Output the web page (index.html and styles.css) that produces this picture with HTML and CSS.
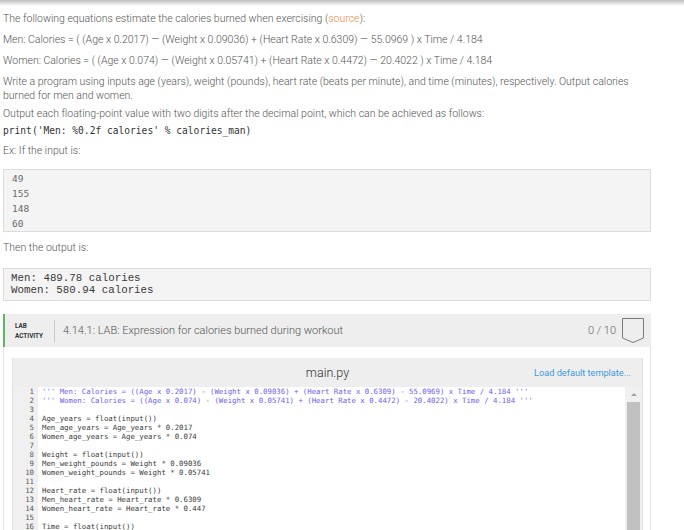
FILE: index.html
```html
<!DOCTYPE html>
<html lang="en">
<head>
<meta charset="utf-8">
<title>LAB: Expression for calories burned during workout</title>
<link rel="stylesheet" href="styles.css">
</head>
<body>
<div class="topbar"></div>
<main class="page">
  <p>The following equations estimate the calories burned when exercising (<a class="src">source</a>):</p>
  <p>Men: Calories = ( (Age x 0.2017) — (Weight x 0.09036) + (Heart Rate x 0.6309) — 55.0969 ) x Time / 4.184</p>
  <p>Women: Calories = ( (Age x 0.074) — (Weight x 0.05741) + (Heart Rate x 0.4472) — 20.4022 ) x Time / 4.184</p>
  <p class="p-write">Write a program using inputs age (years), weight (pounds), heart rate (beats per minute), and time (minutes), respectively. Output calories burned for men and women.</p>
  <p class="p-output">Output each floating-point value with two digits after the decimal point, which can be achieved as follows:<code class="inline-code">print('Men: %0.2f calories' % calories_man)</code></p>
  <p class="p-ex">Ex: If the input is:</p>
  <pre class="sample sample-in">49
155
148
60</pre>
  <p class="p-then">Then the output is:</p>
  <pre class="sample sample-out">Men: 489.78 calories
Women: 580.94 calories</pre>

  <section class="lab">
    <header class="lab-head">
      <div class="lab-tag">LAB<br>ACTIVITY</div>
      <div class="lab-divider"></div>
      <div class="lab-title">4.14.1: LAB: Expression for calories burned during workout</div>
      <div class="lab-score">0 / 10</div>
      <svg class="badge" width="24" height="27" viewBox="0 0 24 27"><path d="M1.5 1.5 H22.5 V21 L12 25.5 L1.5 21 Z" fill="none" stroke="#7a7a7a" stroke-width="1"/></svg>
    </header>
    <div class="lab-body">
      <div class="editor">
        <div class="editor-head">
          <span></span>
          <span class="filename">main.py</span>
          <a class="load">Load default template...</a>
        </div>
        <div class="editor-main">
          <pre class="gutter">1
2
3
4
5
6
7
8
9
10
11
12
13
14
15
16</pre>
          <pre class="code"><span class="cm">''' Men: Calories = ((Age x 0.2017) - (Weight x 0.09036) + (Heart Rate x 0.6309) - 55.0969) x Time / 4.184 '''</span>
<span class="cm">''' Women: Calories = ((Age x 0.074) - (Weight x 0.05741) + (Heart Rate x 0.4472) - 20.4022) x Time / 4.184 '''</span>

Age_years = float(input())
Men_age_years = Age_years * 0.2017
Women_age_years = Age_years * 0.074

Weight = float(input())
Men_weight_pounds = Weight * 0.09036
Women_weight_pounds = Weight * 0.05741

Heart_rate = float(input())
Men_heart_rate = Heart_rate * 0.6309
Women_heart_rate = Heart_rate * 0.447

Time = float(input())</pre>
          <div class="scrollbar">
            <div class="arrow"></div>
            <div class="thumb"></div>
          </div>
        </div>
      </div>
    </div>
  </section>
</main>
</body>
</html>
```

FILE: styles.css
```css
html {
  overflow: hidden;
}

body {
  margin: 0;
  background: #ffffff;
  font-family: Roboto, "Liberation Sans", sans-serif;
  font-weight: 300;
  font-size: 10.5px;
  color: #555555;
}

.topbar {
  height: 6px;
  background: linear-gradient(rgba(0, 0, 0, 0.26), rgba(0, 0, 0, 0));
}

.page {
  width: 648px;
  padding: 6px 0 0 3px;
}

.page p {
  margin: 0 0 8px;
  line-height: 13px;
}

.src {
  color: #f0883e;
}

.p-write {
  line-height: 14px !important;
  margin-bottom: 4px !important;
}

.p-output {
  margin-bottom: 6px !important;
}

.inline-code {
  display: block;
  margin-top: 4px;
  line-height: 14px;
  font-family: "DejaVu Sans Mono", monospace;
  font-size: 9.6px;
  color: #333333;
}

.p-ex {
  margin-bottom: 12px !important;
}

.sample {
  margin: 0;
  background: #f4f4f4;
  border: 1px solid #dcdcdc;
}

.sample-in {
  padding: 1px 8px 0;
  line-height: 15px;
  font-family: "DejaVu Sans Mono", monospace;
  font-size: 9.5px;
  color: #6a6a6a;
  margin-bottom: 9px;
}

.p-then {
  margin-bottom: 14px !important;
}

.sample-out {
  padding: 3px 7px 4px;
  line-height: 12px;
  font-family: "Liberation Mono", monospace;
  font-size: 10.8px;
  color: #3a3a3a;
}

.lab {
  margin-top: 13px;
}

.lab-head {
  display: flex;
  align-items: center;
  height: 33px;
  background: #eeeeee;
  border-left: 2px solid #5cb85c;
  padding: 0 6px 0 10px;
}

.lab-tag {
  font-weight: 700;
  font-size: 6.4px;
  line-height: 10px;
  color: #333333;
  width: 31px;
}

.lab-divider {
  width: 1px;
  height: 22px;
  background: #c8c8c8;
  margin: 0 8px 0 8px;
}

.lab-title {
  flex: 1;
  font-size: 11px;
  color: #555555;
}

.lab-score {
  font-size: 11px;
  color: #666666;
  margin-right: 5px;
}

.badge {
  display: block;
}

.lab-body {
  border-left: 1px solid #e2e2e2;
  border-right: 1px solid #e2e2e2;
  padding: 11px 7px 0 8px;
}

.editor {
  border-left: 1px solid #e2e2e2;
  border-right: 1px solid #e2e2e2;
}

.editor-head {
  display: grid;
  grid-template-columns: 1fr auto 1fr;
  align-items: center;
  height: 29px;
  background: #eeeeee;
}

.filename {
  font-size: 12.5px;
  color: #333333;
}

.load {
  justify-self: end;
  padding-right: 11px;
  font-weight: 400;
  font-size: 9.2px;
  color: #3d9be0;
}

.editor-main {
  display: flex;
  height: 260px;
}

.gutter,
.code {
  margin: 0;
  font-family: "DejaVu Sans Mono", monospace;
  font-size: 7.35px;
  line-height: 9px;
}

.gutter {
  width: 21px;
  padding-right: 4px;
  text-align: right;
  background: #f0f0f0;
  color: #555555;
}

.code {
  flex: 1;
  padding-left: 4px;
  color: #3a3a3a;
}

.cm {
  color: #6e5ef0;
}

.scrollbar {
  width: 17px;
  background: #f1f1f1;
  display: flex;
  flex-direction: column;
  align-items: center;
}

.arrow {
  margin-top: 6px;
  width: 0;
  height: 0;
  border-left: 3.5px solid transparent;
  border-right: 3.5px solid transparent;
  border-bottom: 3.5px solid #a3a3a3;
}

.thumb {
  margin-top: 6px;
  width: 13px;
  flex: 1;
  background: #c1c1c1;
}
```
